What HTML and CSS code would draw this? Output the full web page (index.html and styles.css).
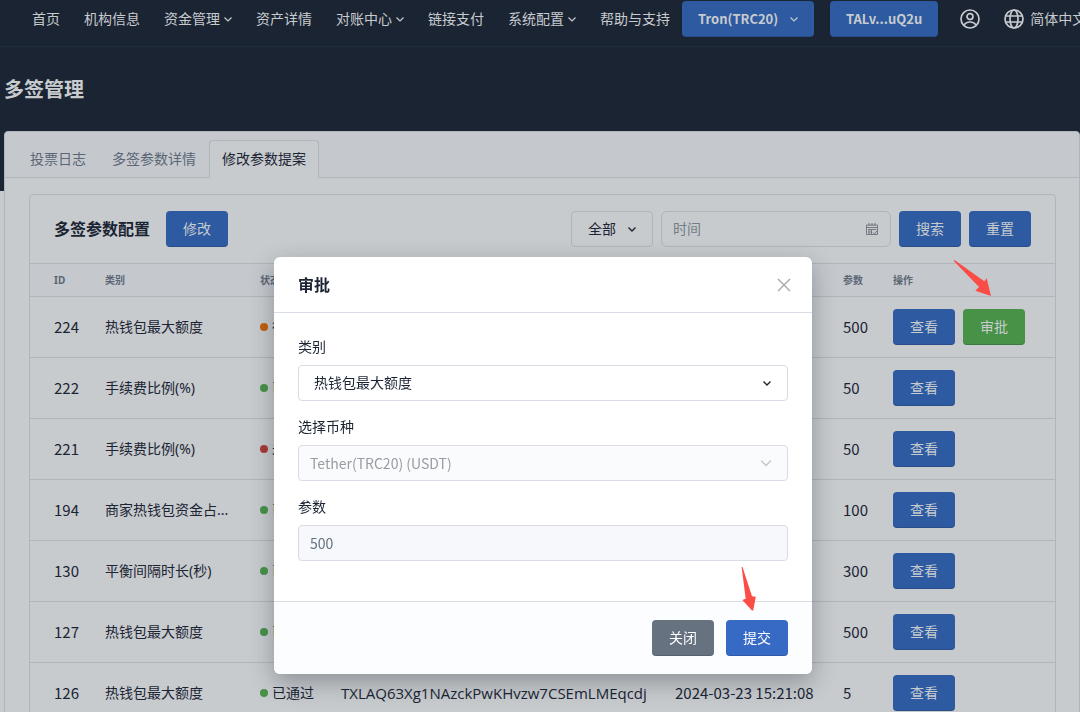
FILE: index.html
```html
<!DOCTYPE html>
<html lang="zh-CN">
<head>
<meta charset="utf-8">
<meta name="viewport" content="width=device-width, initial-scale=1">
<title>多签管理</title>
<link rel="stylesheet" href="styles.css">
</head>
<body class="modal-open">
<header class="navbar">
  <nav class="nav">
    <a class="nav-link" href="#">首页</a>
    <a class="nav-link" href="#">机构信息</a>
    <a class="nav-link" href="#">资金管理<svg class="caret" viewBox="0 0 8 8"><path d="M.5 2.500l3.500 3.500 3.500-3.500"/></svg></a>
    <a class="nav-link" href="#">资产详情</a>
    <a class="nav-link" href="#">对账中心<svg class="caret" viewBox="0 0 8 8"><path d="M.5 2.500l3.500 3.500 3.500-3.500"/></svg></a>
    <a class="nav-link" href="#">链接支付</a>
    <a class="nav-link" href="#">系统配置<svg class="caret" viewBox="0 0 8 8"><path d="M.5 2.500l3.500 3.500 3.500-3.500"/></svg></a>
    <a class="nav-link" href="#">帮助与支持</a>
  </nav>
  <div class="nav-tools">
    <button class="btn btn-wallet btn-network" type="button">Tron(TRC20)<svg class="caret" viewBox="0 0 8 8"><path d="M.5 2.500l3.500 3.500 3.500-3.500"/></svg></button>
    <button class="btn btn-wallet" type="button">TALv...uQ2u</button>
  </div>
  <a class="nav-icon" href="#" aria-label="账户"><svg viewBox="0 0 20 20"><circle cx="10" cy="10" r="9"/><circle cx="10" cy="7.6" r="3"/><path d="M4.2 16.2c1-2.300 3.200-3.200 5.800-3.200s4.800.9 5.800 3.200"/></svg></a>
  <a class="nav-icon nav-lang" href="#"><svg viewBox="0 0 20 20"><circle cx="10" cy="10" r="9"/><ellipse cx="10" cy="10" rx="4" ry="9"/><path d="M1.700 7h16.600M1.700 13h16.600"/></svg>简体中文</a>
</header>

<div class="hero"><h1 class="page-title">多签管理</h1></div>

<main class="panel">
  <div class="tabs" role="tablist">
    <button class="tab" type="button" role="tab">投票日志</button>
    <button class="tab" type="button" role="tab">多签参数详情</button>
    <button class="tab tab-active" type="button" role="tab" aria-selected="true">修改参数提案</button>
  </div>
  <div class="panel-body">
    <section class="card">
      <div class="toolbar">
        <h2 class="card-title">多签参数配置</h2>
        <button class="btn btn-dim" type="button">修改</button>
        <form class="filters">
          <select class="filter-select" aria-label="状态"><option>全部</option></select>
          <label class="date-box"><input class="date-input" type="text" placeholder="时间" aria-label="时间">
            <svg class="calendar" viewBox="0 0 12 12"><path d="M.5 2h11v9.500H.5zM.5 4.500h11M3 0v3M6 0v3M9 0v3M3 6v5M5.500 6v5M2 6.500h8M2 9h4M7 9.500l1.500 1.500L11 7.500"/></svg>
          </label>
          <button class="btn btn-dim" type="button">搜索</button>
          <button class="btn btn-dim" type="button">重置</button>
        </form>
      </div>
      <table class="table">
        <colgroup><col class="c-id"><col class="c-type"><col class="c-state"><col class="c-addr"><col class="c-time"><col class="c-value"><col></colgroup>
        <thead><tr><th>ID</th><th>类别</th><th>状态</th><th></th><th></th><th>参数</th><th>操作</th></tr></thead>
        <tbody>
          <tr><td class="num">224</td><td>热钱包最大额度</td><td><span class="state wait">待审批</span></td><td></td><td></td><td class="num">500</td><td><div class="actions"><button class="btn btn-dim" type="button">查看</button><button class="btn btn-approve" type="button">审批</button></div></td></tr>
          <tr><td class="num">222</td><td>手续费比例(%)</td><td><span class="state">已通过</span></td><td></td><td></td><td class="num">50</td><td><button class="btn btn-dim" type="button">查看</button></td></tr>
          <tr><td class="num">221</td><td>手续费比例(%)</td><td><span class="state fail">未通过</span></td><td></td><td></td><td class="num">50</td><td><button class="btn btn-dim" type="button">查看</button></td></tr>
          <tr><td class="num">194</td><td>商家热钱包资金占...</td><td><span class="state">已通过</span></td><td></td><td></td><td class="num">100</td><td><button class="btn btn-dim" type="button">查看</button></td></tr>
          <tr><td class="num">130</td><td>平衡间隔时长(秒)</td><td><span class="state">已通过</span></td><td></td><td></td><td class="num">300</td><td><button class="btn btn-dim" type="button">查看</button></td></tr>
          <tr><td class="num">127</td><td>热钱包最大额度</td><td><span class="state">已通过</span></td><td></td><td></td><td class="num">500</td><td><button class="btn btn-dim" type="button">查看</button></td></tr>
          <tr><td class="num">126</td><td>热钱包最大额度</td><td><span class="state">已通过</span></td><td class="address">TXLAQ63Xg1NAzckPwKHvzw7CSEmLMEqcdj</td><td class="num">2024-03-23 15:21:08</td><td class="num">5</td><td><button class="btn btn-dim" type="button">查看</button></td></tr>
        </tbody>
      </table>
    </section>
  </div>
</main>

<div class="modal-layer">
  <form class="modal" role="dialog" aria-modal="true" aria-labelledby="modal-title">
    <div class="modal-head">
      <h2 class="card-title" id="modal-title">审批</h2>
      <button class="close" type="button" aria-label="关闭窗口"><svg viewBox="0 0 12 12"><path d="M0 0l12 12M12 0L0 12"/></svg></button>
    </div>
    <div class="modal-body">
      <div class="field"><label for="kind">类别</label><select class="control control-select" id="kind"><option>热钱包最大额度</option></select></div>
      <div class="field"><label for="coin">选择币种</label><select class="control control-coin" id="coin" disabled><option>Tether(TRC20) (USDT)</option></select></div>
      <div class="field"><label for="value">参数</label><input class="control control-value" id="value" type="text" value="500" readonly></div>
    </div>
    <div class="modal-foot">
      <button class="btn btn-grey" type="button">关闭</button>
      <button class="btn btn-primary" type="button">提交</button>
    </div>
  </form>
</div>

<svg class="arrow arrow-approve" viewBox="0 0 38 38"><path d="M1.500 0L31.300 21.300 33.700 18.300 38 36 22.300 30.700 26 27 .8 1z"/></svg>
<svg class="arrow arrow-submit" viewBox="0 0 15 45"><path d="M.6 1L1.500 1 11 30.200 14.800 30.800 12.200 44.500 11 44.500 1.300 34 4.700 32.800z"/></svg>
</body>
</html>
```
FILE: styles.css
```css
* { box-sizing: border-box; }

body {
  margin: 0;
  background: #c7cbce;
  color: #1b2433;
  font: 14px/20px "Noto Sans", "Noto Sans CJK SC", sans-serif;
}
.modal-open { height: 100vh; overflow: hidden; }

button, input, select { font: inherit; color: inherit; margin: 0; }
a { color: inherit; text-decoration: none; }
h1, h2 { margin: 0; }

.btn {
  flex: none;
  height: 36px;
  min-width: 62px;
  padding: 0 16px;
  border: 0;
  border-radius: 4px;
  box-shadow: inset 0 -1px 0 rgba(20, 30, 50, .2);
  color: #fcfdfe;
  white-space: nowrap;
}
.btn-dim, .btn-wallet { background: #2d5aa1; color: #c7cbce; }
.btn-approve { background: #489247; color: #c7cbce; }
.btn-primary { background: #366ac5; }
.btn-grey { background: #677280; }
.btn-wallet { font-family: "Noto Sans CJK SC", sans-serif; font-size: 13px; font-weight: 700; }
.btn-network { display: flex; align-items: center; justify-content: space-between; min-width: 132px; }

.navbar {
  display: flex;
  align-items: center;
  height: 47px;
  padding: 1px 0 9px 32px;
  border-bottom: 1px solid #202e3e;
  background: #1b2433;
  color: #c7cbce;
  overflow: hidden;
  white-space: nowrap;
}
.nav { display: flex; flex: none; gap: 24px; }
.nav-link { display: flex; align-items: center; gap: 4px; }
.caret { width: 8px; height: 8px; fill: none; stroke: currentColor; stroke-width: 1.2; }
.nav-tools { display: flex; flex: none; gap: 16px; margin: 0 22px 0 12px; }
.nav-tools .btn + .btn { min-width: 107px; }
.nav-icon { display: flex; flex: none; align-items: center; gap: 6px; margin-right: 24px; }
.nav-icon svg { width: 20px; height: 20px; fill: none; stroke: currentColor; stroke-width: 1.700; }

.hero { height: 144px; padding: 29px 4px; background: #1b2433; color: #c7cbce; }
.page-title { font-size: 20px; line-height: 28px; }

.panel {
  position: relative;
  margin: -60px 0 0 4px;
  border: 1px solid #b0b4bb;
  border-radius: 4px;
  background: #c7cbce;
}
.tabs {
  display: flex;
  padding: 8px 12px 0;
  border-bottom: 1px solid #b0b4bb;
  border-radius: 4px 4px 0 0;
  background: #c5c9ce;
}
.tab {
  height: 38px;
  margin-bottom: -1px;
  padding: 0 12px;
  border: 1px solid transparent;
  border-radius: 4px 4px 0 0;
  background: none;
  color: #5b6675;
}
.tab-active { border-color: #b0b4bb #b0b4bb #c7cbce; background: #c7cbce; color: #1b2433; }
.panel-body { padding: 16px 23px 24px 24px; }

.card { border: 1px solid #b0b4bb; border-radius: 4px; }
.toolbar { display: flex; align-items: center; gap: 16px; padding: 16px 24px; }
.card-title { font-size: 16px; line-height: 24px; }
.filters { display: flex; gap: 8px; margin-left: auto; }

.filter-select, .date-box, .control { height: 36px; border: 1px solid #b0b4bb; border-radius: 4px; }
.filter-select {
  appearance: none;
  width: 82px;
  padding: 0 16px;
  background: url("data:image/svg+xml,%3Csvg xmlns='http://www.w3.org/2000/svg' width='8' height='8' fill='none' stroke='%231b2433' stroke-width='1.4'%3E%3Cpath d='M.5 2.500l3.500 3.500 3.500-3.500'/%3E%3C/svg%3E") no-repeat right 16px center;
}
.date-box { display: flex; align-items: center; width: 230px; padding: 0 12px 0 11px; border-radius: 6px; }
.date-input { flex: 1; min-width: 0; padding: 0; border: 0; background: none; }
.date-input::placeholder { color: #757c88; opacity: 1; }
.calendar { width: 12px; height: 12px; fill: none; stroke: #757a82; stroke-width: 1; }

.table { width: 100%; border-collapse: separate; border-spacing: 0; table-layout: fixed; }
.c-id { width: 67px; }
.c-type { width: 155px; }
.c-state { width: 81px; }
.c-addr { width: 334px; }
.c-time { width: 168px; }
.c-value { width: 50px; }
.table th {
  height: 34px;
  padding: 0 8px;
  border: solid #b0b4bb;
  border-width: 1px 0;
  background: #c5c9ce;
  color: #5b6675;
  font-size: 10px;
  line-height: 16px;
  text-align: left;
}
.table td { height: 61px; padding: 0 8px; border-bottom: 1px solid #b0b4bb; white-space: nowrap; }
.table th:first-child, .table td:first-child { padding-left: 24px; }
.table .num { font-family: "Noto Sans CJK SC", sans-serif; font-size: 15px; }
.table .address { font-family: "Open Sans", "Noto Sans", sans-serif; font-size: 15px; }
.actions { display: flex; gap: 8px; }
.state { display: flex; align-items: center; gap: 4px; }
.state::before { content: ""; width: 8px; height: 8px; border-radius: 50%; background: #489247; }
.wait::before { background: #c35f0f; }
.fail::before { background: #a83a38; }

.modal-layer {
  position: fixed;
  inset: 0;
  display: flex;
  justify-content: center;
  align-items: flex-start;
  padding: 257px 0 0 6px;
}
.modal {
  width: 538px;
  max-width: 100%;
  border-radius: 6px;
  background: #fff;
  box-shadow: 0 8px 24px rgba(20, 25, 35, .32);
  overflow: hidden;
}
.modal-head {
  display: flex;
  align-items: center;
  justify-content: space-between;
  height: 56px;
  padding: 0 22px 0 24px;
  border-bottom: 1px solid #dadce5;
}
.close { display: flex; padding: 0; border: 0; background: none; }
.close svg { width: 12px; height: 12px; fill: none; stroke: #a5a5a5; stroke-width: 1.300; overflow: visible; }
.modal-body { padding: 24px 24px 40px; }
.field { display: flex; flex-direction: column; gap: 8px; }
.field + .field { margin-top: 16px; }
.control { width: 100%; padding: 0 11px; border-color: #dadce5; background-color: #fff; }
.control-select, .control-coin { appearance: none; background-repeat: no-repeat; background-position: right 16px center; }
.control-select {
  padding: 0 15px;
  background-image: url("data:image/svg+xml,%3Csvg xmlns='http://www.w3.org/2000/svg' width='8' height='8' fill='none' stroke='%231b2433' stroke-width='1.4'%3E%3Cpath d='M.5 2.500l3.500 3.500 3.500-3.500'/%3E%3C/svg%3E");
}
.control-coin {
  background-color: #fafbfd;
  background-image: url("data:image/svg+xml,%3Csvg xmlns='http://www.w3.org/2000/svg' width='10' height='8' fill='none' stroke='%23c3c7ce' stroke-width='1.5'%3E%3Cpath d='M0 1.500l5 5 5-5'/%3E%3C/svg%3E");
  color: #989ca3;
  opacity: 1;
}
.control-coin, .control-value { font-family: "Noto Sans CJK SC", sans-serif; }
.control-value { background-color: #f6f8fb; color: #667180; }
.modal-foot {
  display: flex;
  justify-content: flex-end;
  gap: 12px;
  padding: 18px 24px;
  border-top: 1px solid #dadce5;
  background: #fcfdfe;
}

.arrow { position: absolute; fill: #fb4c46; }
.arrow-approve { left: 953px; top: 260px; width: 38px; height: 38px; }
.arrow-submit { left: 741px; top: 566px; width: 15px; height: 45px; }
```
